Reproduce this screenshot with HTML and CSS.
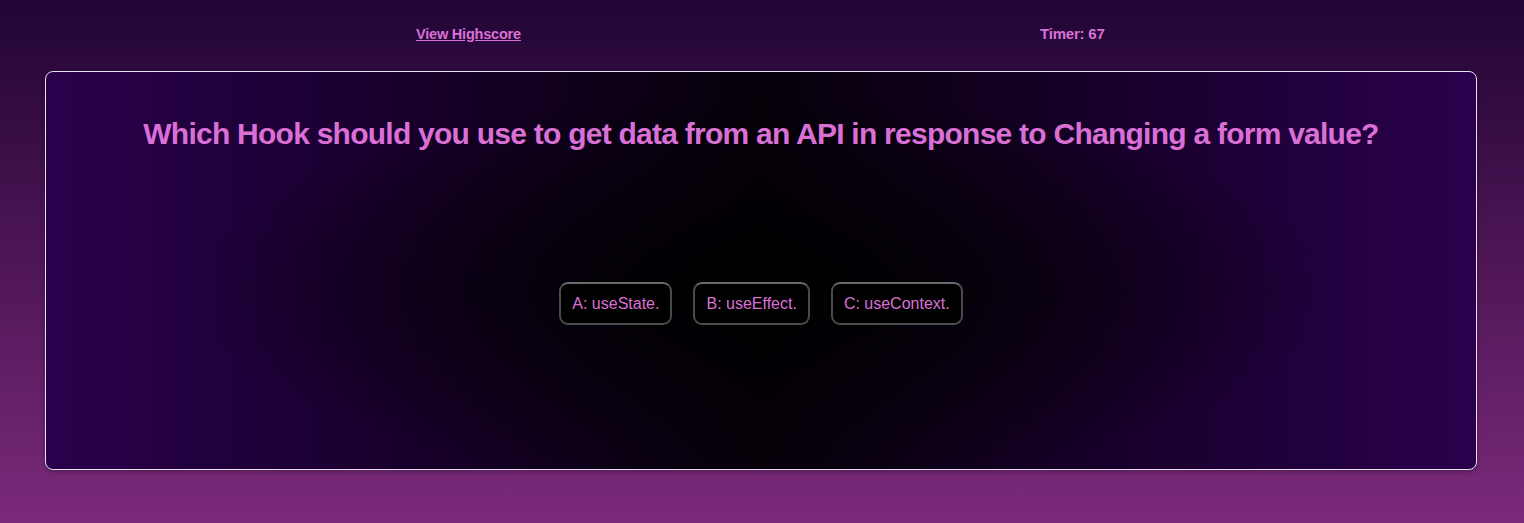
FILE: index.html
```html
<!DOCTYPE html>
<html lang="en">
<head>
<meta charset="utf-8">
<title>Quiz</title>
<link rel="stylesheet" href="styles.css">
</head>
<body>
<header class="topbar">
  <a class="highscore" href="#">View Highscore</a>
  <span class="timer">Timer: 67</span>
</header>
<main class="card">
  <h1 class="question">Which Hook should you use to get data from an API in response to Changing a form value?</h1>
  <div class="answers">
    <button class="answer">A: useState.</button>
    <button class="answer">B: useEffect.</button>
    <button class="answer">C: useContext.</button>
  </div>
</main>
</body>
</html>
```
FILE: styles.css
```css
html, body {
  margin: 0;
  height: 100%;
}
body {
  background: linear-gradient(to bottom, #210536 0%, #4a1452 45%, #7a2a7a 100%);
  font-family: "Liberation Sans", Arial, sans-serif;
  color: #da70d6;
  padding: 0 47px 0 45px;
  box-sizing: border-box;
}
.topbar {
  display: flex;
  height: 71px;
  align-items: center;
  padding-left: 371px;
  box-sizing: border-box;
  font-size: 14px;
  font-weight: bold;
  letter-spacing: -0.2px;
  padding-bottom: 4px;
}
.highscore {
  color: #da70d6;
  text-decoration: underline;
  width: 624px;
  font-size: 14.5px;
}
.timer {
  color: #da70d6;
  font-size: 15px;
}
.card {
  height: 399px;
  box-sizing: border-box;
  border: 1px solid #e8e0ee;
  border-radius: 8px;
  background:
    radial-gradient(ellipse 40% 50% at 50% 55%, rgba(0,0,0,1) 0%, rgba(0,0,0,0) 100%),
    linear-gradient(to right, #2a004c 0%, #1a0030 22%, #0b0014 42%, #060009 50%, #0b0014 58%, #1a0030 78%, #2a004c 100%);
  box-shadow: 0 2px 4px rgba(0,0,0,0.25);
  display: flex;
  flex-direction: column;
  align-items: center;
}
.question {
  margin: 45px 0 0;
  font-size: 30px;
  font-weight: bold;
  letter-spacing: -0.75px;
  color: #da70d6;
  text-align: center;
}
.answers {
  display: flex;
  gap: 21px;
  margin-top: 131px;
}
.answer {
  background: #000;
  color: #da70d6;
  font-family: "Liberation Sans", Arial, sans-serif;
  font-size: 16px;
  font-weight: normal;
  height: 43px;
  padding: 0 11px;
  border: 2px solid #4a4a4a;
  border-top-color: #6a6a6a;
  border-radius: 9px;
  cursor: pointer;
}
```
